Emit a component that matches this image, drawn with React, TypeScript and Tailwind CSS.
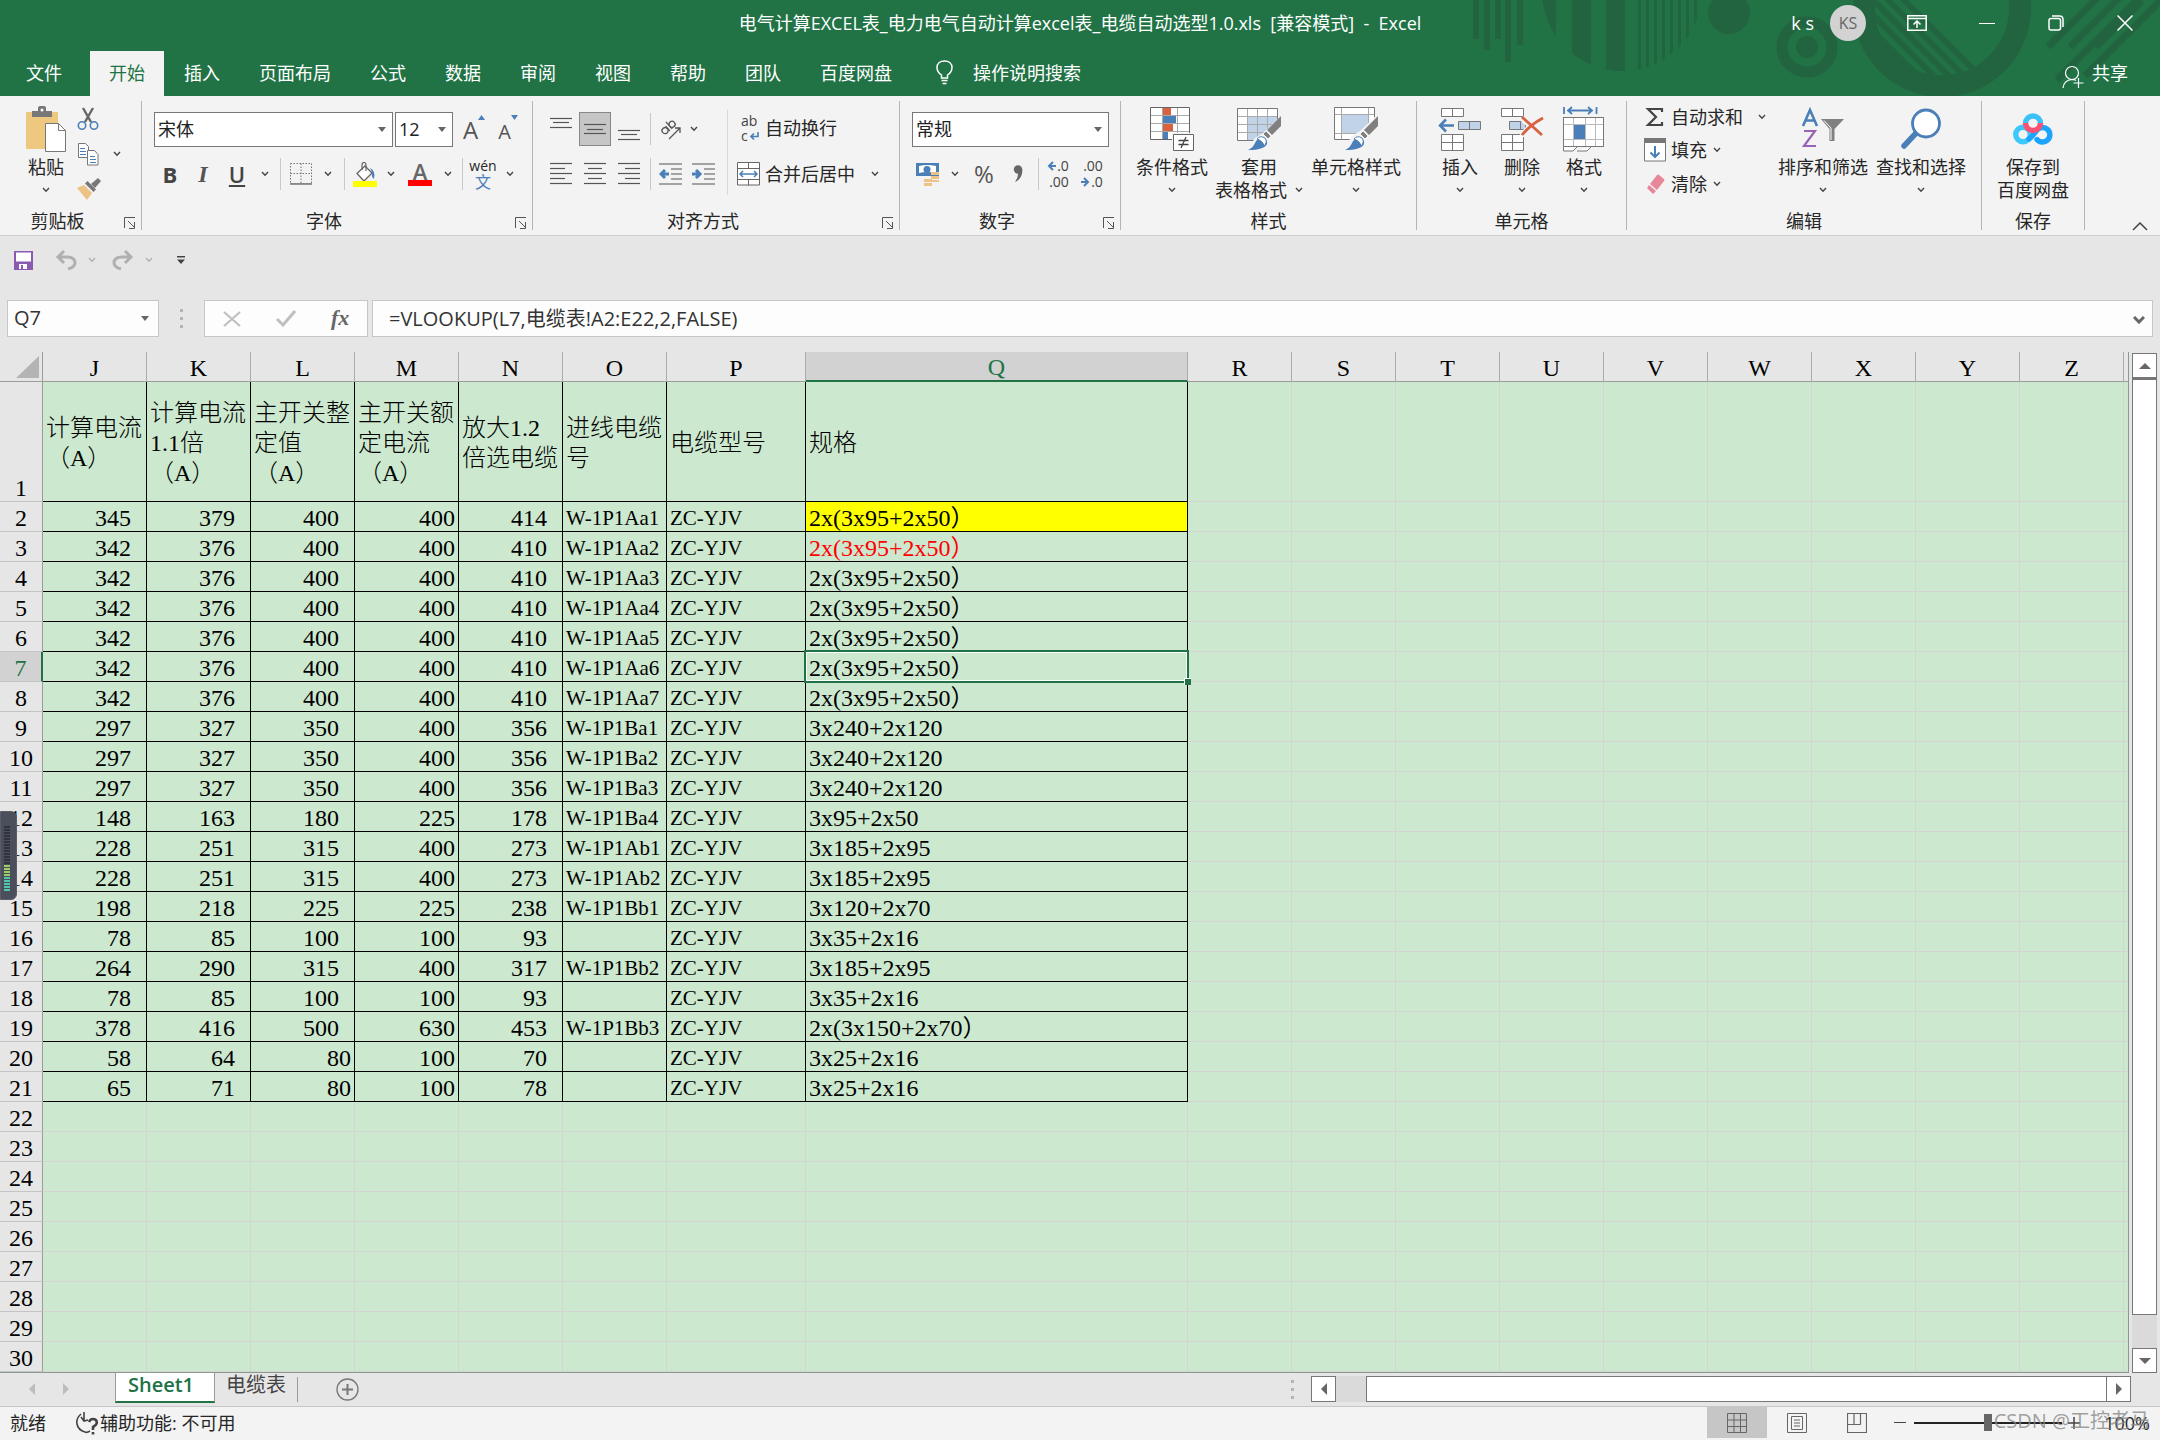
import type { ReactNode } from 'react';
import clsx from 'clsx';

const tabs = ['插入', '页面布局', '公式', '数据', '审阅', '视图', '帮助', '团队', '百度网盘'];

const columns = ['J', 'K', 'L', 'M', 'N', 'O', 'P', 'Q', 'R', 'S', 'T', 'U', 'V', 'W', 'X', 'Y', 'Z'];

const headings = [
  '计算电流\n（A）',
  '计算电流\n1.1倍\n（A）',
  '主开关整\n定值\n（A）',
  '主开关额\n定电流\n（A）',
  '放大1.2\n倍选电缆',
  '进线电缆\n号',
  '电缆型号',
  '规格',
];

const data = [
  ['345', '379', '400', '400', '414', 'W-1P1Aa1', 'ZC-YJV', '2x(3x95+2x50）'],
  ['342', '376', '400', '400', '410', 'W-1P1Aa2', 'ZC-YJV', '2x(3x95+2x50）'],
  ['342', '376', '400', '400', '410', 'W-1P1Aa3', 'ZC-YJV', '2x(3x95+2x50）'],
  ['342', '376', '400', '400', '410', 'W-1P1Aa4', 'ZC-YJV', '2x(3x95+2x50）'],
  ['342', '376', '400', '400', '410', 'W-1P1Aa5', 'ZC-YJV', '2x(3x95+2x50）'],
  ['342', '376', '400', '400', '410', 'W-1P1Aa6', 'ZC-YJV', '2x(3x95+2x50）'],
  ['342', '376', '400', '400', '410', 'W-1P1Aa7', 'ZC-YJV', '2x(3x95+2x50）'],
  ['297', '327', '350', '400', '356', 'W-1P1Ba1', 'ZC-YJV', '3x240+2x120'],
  ['297', '327', '350', '400', '356', 'W-1P1Ba2', 'ZC-YJV', '3x240+2x120'],
  ['297', '327', '350', '400', '356', 'W-1P1Ba3', 'ZC-YJV', '3x240+2x120'],
  ['148', '163', '180', '225', '178', 'W-1P1Ba4', 'ZC-YJV', '3x95+2x50'],
  ['228', '251', '315', '400', '273', 'W-1P1Ab1', 'ZC-YJV', '3x185+2x95'],
  ['228', '251', '315', '400', '273', 'W-1P1Ab2', 'ZC-YJV', '3x185+2x95'],
  ['198', '218', '225', '225', '238', 'W-1P1Bb1', 'ZC-YJV', '3x120+2x70'],
  ['78', '85', '100', '100', '93', '', 'ZC-YJV', '3x35+2x16'],
  ['264', '290', '315', '400', '317', 'W-1P1Bb2', 'ZC-YJV', '3x185+2x95'],
  ['78', '85', '100', '100', '93', '', 'ZC-YJV', '3x35+2x16'],
  ['378', '416', '500', '630', '453', 'W-1P1Bb3', 'ZC-YJV', '2x(3x150+2x70）'],
  ['58', '64', '80', '100', '70', '', 'ZC-YJV', '3x25+2x16'],
  ['65', '71', '80', '100', '78', '', 'ZC-YJV', '3x25+2x16'],
];

const emptyRows = [22, 23, 24, 25, 26, 27, 28, 29, 30, 31];

/* ---------- small building blocks ---------- */

function Chevron({ className = 'text-[#444]' }: { className?: string }) {
  return (
    <svg width="8" height="6" viewBox="0 0 8 6" className={clsx('shrink-0', className)} fill="none" stroke="currentColor" strokeWidth="1.4">
      <path d="M1 1l3 3.2L7 1" />
    </svg>
  );
}

function Caret({ className }: { className?: string }) {
  return (
    <svg width="8" height="5" viewBox="0 0 8 5" className={clsx('pointer-events-none', className)} fill="#666">
      <path d="M0 0h8L4 5z" />
    </svg>
  );
}

function Tool({ label, className, children }: { label: string; className: string; children: ReactNode }) {
  return (
    <button type="button" aria-label={label} className={clsx('flex h-[34px] shrink-0 items-center justify-center', className)}>
      {children}
    </button>
  );
}

function Separator({ className }: { className: string }) {
  return (
    <div className={clsx('flex h-8 shrink-0 justify-center', className)}>
      <div className="h-full w-px bg-[#c8c8c8]" />
    </div>
  );
}

function Combo({ label, value, className }: { label: string; value: string; className: string }) {
  return (
    <div className={clsx('relative h-[35px] shrink-0', className)}>
      <select aria-label={label} className="h-full w-full appearance-none border border-[#777] bg-white pb-[2px] pl-[3px] text-[#222]">
        <option>{value}</option>
      </select>
      <Caret className="absolute top-[15px] right-[7px]" />
    </div>
  );
}

function Group({ title, launcher = true, className, children }: { title: string; launcher?: boolean; className: string; children: ReactNode }) {
  return (
    <section aria-label={title} className={clsx('relative flex h-[129px] shrink-0 flex-col border-r border-[#b4b4b4]', className)}>
      <div className="flex h-[111px] items-start">{children}</div>
      <div className="text-center leading-[18px]">{title}</div>
      {launcher && (
        <button type="button" aria-label={title + '设置'} className="absolute right-[5px] bottom-px">
          <svg width="12" height="12" viewBox="0 0 12 12" fill="none" stroke="#555">
            <path d="M.5 11V.5H11M4 4l6 6M10.500 5v6.500H5" />
          </svg>
        </button>
      )}
    </section>
  );
}

function BigButton({ icon, lines, className }: { icon: ReactNode; lines: string[]; className: string }) {
  return (
    <button type="button" className={clsx('flex shrink-0 flex-col items-center', className)}>
      <span className="flex h-[55px] items-center justify-center">{icon}</span>
      <span className="leading-[22px] whitespace-nowrap">{lines[0]}</span>
      <span className="flex h-6 items-center gap-2 leading-6 whitespace-nowrap">
        {lines[1]}
        <Chevron />
      </span>
    </button>
  );
}

function Lines({ rows }: { rows: number[][] }) {
  return (
    <svg width="22" height="30" viewBox="0 0 22 30" stroke="#555" strokeWidth="1.200">
      {rows.map(([x1, x2, y], i) => (
        <path key={i} d={`M${x1} ${y + 0.5}H${x2}`} />
      ))}
    </svg>
  );
}

/* ---------- icons ---------- */

function PasteIcon() {
  return (
    <svg width="42" height="46" viewBox="0 0 42 46">
      <rect x="1" y="6" width="32" height="37" rx="1" fill="#edc87e" />
      <path d="M7 5h6V2q0-2 2-2h4q2 0 2 2v3h6v6H7z" fill="#777" />
      <circle cx="17" cy="4" r="1.500" fill="#fff" />
      <path d="M20.500 17.500h13l7 7v21h-20z" fill="#fff" stroke="#777" />
      <path d="M33.500 17.500v7h7" fill="none" stroke="#777" />
    </svg>
  );
}

function CutIcon() {
  return (
    <svg width="22" height="24" viewBox="0 0 22 24" fill="none">
      <path d="M6 1l8 14M16 1L8 15" stroke="#666" strokeWidth="2.400" />
      <circle cx="5" cy="18.500" r="3.700" stroke="#4a7fb8" strokeWidth="1.600" />
      <circle cx="17" cy="18.500" r="3.700" stroke="#4a7fb8" strokeWidth="1.600" />
    </svg>
  );
}

function CopyIcon() {
  return (
    <svg width="22" height="24" viewBox="0 0 22 24" stroke="#777" fill="#fff">
      <path d="M1.500 1.500h7l3 3v11h-10z" />
      <path d="M3 6.500h5M3 9.500h6M3 12.500h6" stroke="#4a7fb8" />
      <path d="M10.500 8.500h7l3.500 4v10.500H10.500z" />
      <path d="M13 14.500h5M13 17.500h6M13 20.500h6" stroke="#4a7fb8" />
    </svg>
  );
}

function PainterIcon() {
  return (
    <svg width="24" height="22" viewBox="0 0 24 22">
      <path d="M0 10l7-3 8 8-5 7z" fill="#edc287" />
      <path d="M8 5.500l2.500-2.500 8.500 8.500-2.500 2.500z" fill="#777" />
      <path d="M14 6l7-6 3 3-6 7z" fill="#777" />
    </svg>
  );
}

function BordersIcon() {
  return (
    <svg width="22" height="22" viewBox="0 0 22 22" fill="none" stroke="#777">
      <path d="M.5 .5h21v20H.5zM11 .5v20M.5 10.500h21" strokeDasharray="1.500 1.500" />
      <path d="M0 21h22" strokeWidth="1.500" />
    </svg>
  );
}

function FillColorIcon() {
  return (
    <svg width="24" height="25" viewBox="0 0 24 25">
      <path d="M4 11.500L12 4l7 7-8 8z" fill="#fff" stroke="#666" strokeWidth="1.300" />
      <path d="M9 8V3q0-2.500 2-2.500T13 3v6" fill="none" stroke="#666" strokeWidth="1.200" />
      <path d="M17 6q6 3 4 11-3-2-2-7z" fill="#4a7fb8" />
      <path d="M0 19h24v6H0z" fill="#ff0" />
    </svg>
  );
}

function CondFormatIcon() {
  return (
    <svg width="44" height="44" viewBox="0 0 44 44">
      <path d="M.5 .5h39v32H.5z" fill="#fff" />
      <path d="M13 1h8v7h-8z" fill="#d8623f" />
      <path d="M13 9h13v7H13z" fill="#4a7fb8" />
      <path d="M13 17h10v7H13z" fill="#d8623f" />
      <path d="M13 25h5v7h-5z" fill="#4a7fb8" />
      <path d="M.5 8.500h39M.5 16.500h39M.5 24.500h39M12.500 0v32M27.500 0v32" stroke="#aaa" />
      <path d="M.5 .5h39v32H.5z" fill="none" stroke="#666" />
      <path d="M22 26h22v18H22z" fill="#f3f3f3" />
      <path d="M23.500 27.500h20v16h-20z" fill="#fff" stroke="#666" />
      <path d="M28.500 33.500h10M28.500 37.500h10M36 30l-5 11" stroke="#444" strokeWidth="1.300" />
    </svg>
  );
}

function Brush() {
  return (
    <g>
      <path d="M44 9v10l-9 9-5-5z" fill="#808080" />
      <path d="M29 24l5 5-3 3-5-5z" fill="#808080" stroke="#fff" strokeWidth=".8" />
      <path d="M11 43q5-2 7-7t8-5q5 2 4 6-3 6-19 6z" fill="#4a7fb8" />
      <path d="M20 32q3-4 8-1 3 4-1 8-1-5-7-7z" fill="#fff" stroke="#4a7fb8" />
    </g>
  );
}

function TableFormatIcon() {
  return (
    <svg width="44" height="44" viewBox="0 0 44 44">
      <path d="M.5 1.500h40v32H.5z" fill="#fff" />
      <path d="M11 10h29v23H11z" fill="#c0d3e9" />
      <path d="M.5 9.500h40M.5 17.500h40M.5 25.500h40M10.500 1v32M20.500 1v32M30.500 1v32" stroke="#aaa" />
      <path d="M.5 1.500h40v32H.5z" fill="none" stroke="#777" />
      <path d="M44 9L26 26l-8 5-8 12h34z" fill="#f3f3f3" />
      <Brush />
    </svg>
  );
}

function CellStylesIcon() {
  return (
    <svg width="44" height="44" viewBox="0 0 44 44">
      <path d="M.5 .5h40v32H.5z" fill="#fff" />
      <path d="M8 8h26v18H8z" fill="#c0d3e9" />
      <path d="M.5 7.500h40M.5 26.500h40M7.500 0v32M34.500 0v32" stroke="#aaa" />
      <path d="M.5 .5h40v32H.5z" fill="none" stroke="#777" />
      <path d="M44 7L26 24l-8 5-8 12h34z" fill="#f3f3f3" />
      <Brush />
    </svg>
  );
}

function InsertCellsIcon() {
  return (
    <svg width="44" height="44" viewBox="0 0 44 44" fill="#fff" stroke="#777">
      <path d="M3.500 1.500h22v8h-22zM14.500 1.500v8M3.500 27.500h22v16h-22zM14.500 27.500v16M3.500 35.500h22" />
      <path d="M20.500 14.500h22v8h-22zM31.500 14.500v8" fill="#c0d3e9" />
      <path d="M16 18.500H2M8 12.500l-6 6 6 6" fill="none" stroke="#4a7fb8" strokeWidth="2.500" />
    </svg>
  );
}

function DeleteCellsIcon() {
  return (
    <svg width="44" height="44" viewBox="0 0 44 44" fill="#fff" stroke="#777">
      <path d="M1.500 1.500h22v8h-22zM12.500 1.500v8M1.500 27.500h22v16h-22zM12.500 27.500v16M1.500 35.500h22" />
      <path d="M9.500 14.500h16v8h-16zM20.500 14.500v8" fill="#c0d3e9" />
      <path d="M22 11l20 18M42 11Q30 18 22 29" fill="none" stroke="#f3f3f3" strokeWidth="6" />
      <path d="M22 10l20 18M43 11Q30 18 22 28" fill="none" stroke="#d8623f" strokeWidth="2.800" />
    </svg>
  );
}

function FormatCellsIcon() {
  return (
    <svg width="42" height="46" viewBox="0 0 42 46" fill="#fff" stroke="#777">
      <path d="M.5 11.500h40v29H.5z" />
      <path d="M.5 18.500h40M.5 33.500h40M10.500 11v30M22.500 11v30M32.500 11v30" stroke="#bbb" />
      <path d="M.5 11.500h40v29H.5z" fill="none" />
      <path d="M11 19h11v14H11z" fill="#4a7fb8" stroke="none" />
      <path d="M.5 41v4H10l4-4M14 45h10l4-4" />
      <path d="M1 1v7M33.500 1v7M5 4.500h24M9 1L5 4.500 9 8M25 1l4 3.500L25 8" fill="none" stroke="#4a7fb8" strokeWidth="1.800" />
    </svg>
  );
}

function SortIcon() {
  return (
    <svg width="44" height="44" viewBox="0 0 44 44" fill="none">
      <path d="M2 19L9 3l7 16M4.500 13.500h9" stroke="#4a7fb8" strokeWidth="2.600" />
      <path d="M3 24h11L3 39h12" stroke="#9b63b8" strokeWidth="2.200" />
      <path d="M20 12h23L33.500 22v12h-5V22z" fill="#808080" />
      <path d="M23 13.500l7 7.500v12" stroke="#fff" />
    </svg>
  );
}

function FindIcon() {
  return (
    <svg width="42" height="42" viewBox="0 0 42 42">
      <path d="M18 23L4 38" stroke="#4a7fb8" strokeWidth="5.500" strokeLinecap="round" />
      <circle cx="26" cy="15.500" r="13.500" fill="#fff" stroke="#4a7fb8" strokeWidth="2.800" />
    </svg>
  );
}

function BaiduIcon() {
  return (
    <svg width="40" height="32" viewBox="0 0 40 32" fill="none" strokeWidth="5.400">
      <circle cx="10" cy="21.500" r="7.300" stroke="#3cc8fa" />
      <path d="M16 26q2.500-1.500 8-9a7.300 7.300 0 1 1 0 9.500" stroke="#1ba4fb" strokeLinecap="round" />
      <path d="M12.500 10.500a7.500 7.500 0 0 1 15 0" stroke="#3cc0fa" />
      <path d="M12.500 10a7.500 7.500 0 0 0 15 0" stroke="#fb5274" />
    </svg>
  );
}

function TitlePattern() {
  return (
    <svg width="700" height="96" viewBox="1460 0 700 96" className="absolute top-0 right-0" fill="#22643f">
      <path d="M1473 0h6v39h-6zM1484 0h6v50h-6zM1495 0h6v39h-6zM1505 0h6v62h-6zM1517 0h6v45h-6z" />
      <clipPath id="disc">
        <circle cx="1622" cy="-9" r="80" />
      </clipPath>
      <g clipPath="url(#disc)">
        <path d="M1540 0h16v80h-16zM1572 0h19v80h-19zM1606 0h19v80h-19zM1638 0h3v80h-3zM1646 0h3v80h-3zM1654 0h3v80h-3zM1662 0h3v80h-3zM1670 0h3v80h-3zM1678 0h3v80h-3zM1686 0h3v80h-3zM1694 0h3v80h-3z" />
      </g>
      <circle cx="1729" cy="13" r="21" />
      <circle cx="1807" cy="47" r="25" fill="none" stroke="#22643f" strokeWidth="11" />
      <circle cx="1807" cy="47" r="11" />
      <circle cx="1942" cy="8" r="78" fill="none" stroke="#22643f" strokeWidth="22" />
      <clipPath id="ringHole">
        <path d="M1872 8a70 70 0 0 0 110 64L1912 0h-36z" />
      </clipPath>
      <g clipPath="url(#ringHole)" stroke="#22643f" strokeWidth="6">
        <path d="M1896-8l90 90M1882-6l90 90M1868-5l90 90M1854-4l90 90M1840-2l90 90M1826 0l90 90" />
      </g>
      <path d="M2048 47l50-50M2070 47l50-50M2096 47l46-46M2057 80l100-100M2085 76l76-76" fill="none" stroke="#22643f" strokeWidth="7" />
    </svg>
  );
}

/* ---------- sections ---------- */

function TitleBar() {
  return (
    <header className="relative bg-[#217346] text-white">
      <TitlePattern />
      <div className="relative flex h-[46px] items-center">
        <div className="flex-1" />
        <h1 className="whitespace-pre">电气计算EXCEL表_电力电气自动计算excel表_电缆自动选型1.0.xls  [兼容模式]  -  Excel</h1>
        <div className="flex flex-1 items-center justify-end">
          <span className="mr-4">k s</span>
          <span className="mr-4 flex size-9 items-center justify-center rounded-full bg-[#d2d2d2] text-base text-[#666]">KS</span>
          <button type="button" aria-label="功能区显示选项" className="flex w-[70px] justify-center">
            <svg width="20" height="16" viewBox="0 0 20 16" fill="none" stroke="#fff" strokeWidth="1.500">
              <path d="M.8 .8h18.400v14.400H.8zM1 3.500h18M10 13V6M6.500 9.500L10 6l3.500 3.500" />
            </svg>
          </button>
          <button type="button" aria-label="最小化" className="flex w-[69px] justify-center">
            <span className="h-px w-4 bg-white" />
          </button>
          <button type="button" aria-label="还原" className="flex w-[69px] justify-center">
            <svg width="16" height="16" viewBox="0 0 16 16" fill="none" stroke="#fff" strokeWidth="1.500">
              <rect x="1" y="3.500" width="11.500" height="11.500" rx="2" />
              <path d="M4 1h7.500Q15 1 15 4.500V12" />
            </svg>
          </button>
          <button type="button" aria-label="关闭" className="flex w-[70px] justify-center">
            <svg width="16" height="16" viewBox="0 0 16 16" stroke="#fff" strokeWidth="1.500">
              <path d="M.5 .5l15 15M15.500 .5l-15 15" />
            </svg>
          </button>
        </div>
      </div>
      <nav className="relative flex h-[50px] items-end gap-px pl-[7px] *:h-[45px] *:pb-[2px]">
        <button type="button" className="mr-2 px-[19px]">文件</button>
        <button type="button" className="bg-[#f3f3f3] px-[19px] text-[#217346]">开始</button>
        {tabs.map((tab) => (
          <button type="button" key={tab} className="px-[19px]">{tab}</button>
        ))}
        <button type="button" className="ml-[24px] flex items-center gap-5">
          <svg width="17" height="25" viewBox="0 0 17 25" fill="none" stroke="#fff" strokeWidth="1.500">
            <path d="M5.500 18v-3Q1 12 1 7.500C1 3.500 4 1 8.500 1S16 3.500 16 7.500q0 4.500-4.500 7.500v3zM5.500 20.500h6M6.500 23.500h4" />
          </svg>
          操作说明搜索
        </button>
        <div className="flex-1" />
        <button type="button" className="mr-8 flex items-center gap-2">
          <svg width="22" height="24" viewBox="0 0 22 24" fill="none" stroke="#fff" strokeWidth="1.200" className="mt-2">
            <circle cx="10" cy="8" r="6.500" />
            <path d="M1 23q1-8 9-8.500 3 0 4 1M16.500 13v10M11.500 18h10" />
          </svg>
          共享
        </button>
      </nav>
    </header>
  );
}

function Ribbon() {
  return (
    <div className="flex h-[140px] items-start border-b border-[#d0d0d0] bg-[#f3f3f3] pt-[5px] text-[#262626]">
      <Group title="剪贴板" className="w-[142px] pr-[26px]">
        <BigButton icon={<PasteIcon />} lines={['粘贴', '']} className="ml-6 w-[44px]" />
        <div className="ml-[9px] flex flex-col">
          <button type="button" aria-label="剪切" className="flex h-[35px] w-6 items-center"><CutIcon /></button>
          <button type="button" aria-label="复制" className="flex h-[35px] w-11 items-center justify-between"><CopyIcon /><Chevron /></button>
          <button type="button" aria-label="格式刷" className="flex h-[35px] w-6 items-center"><PainterIcon /></button>
        </div>
      </Group>

      <Group title="字体" className="w-[391px] pr-[26px]">
        <div className="flex flex-col gap-[10px] pt-[11px] pl-3">
          <div className="flex items-center">
            <Combo label="字体" value="宋体" className="mr-[2px] w-[239px]" />
            <Combo label="字号" value="12" className="w-[58px]" />
            <Tool label="增大字号" className="ml-1 w-[34px] text-[#555]">
              <span className="text-2xl">A</span>
              <svg width="7" height="5" className="mb-6" fill="#4a7fb8"><path d="M0 5h7L3.500 0z" /></svg>
            </Tool>
            <Tool label="减小字号" className="w-[34px] text-[#555]">
              <span className="mt-1 text-xl">A</span>
              <svg width="7" height="5" className="mb-6" fill="#4a7fb8"><path d="M0 0h7L3.500 5z" /></svg>
            </Tool>
          </div>
          <div className="flex items-center">
            <Tool label="加粗" className="w-8 text-[22px] font-bold text-[#444]">B</Tool>
            <Tool label="倾斜" className="w-[34px] font-['Liberation_Serif',serif] text-2xl font-bold text-[#555] italic">I</Tool>
            <Tool label="下划线" className="w-[34px] text-[22px] font-semibold text-[#444] underline underline-offset-2">U</Tool>
            <Tool label="下划线选项" className="w-[22px]"><Chevron /></Tool>
            <Separator className="w-2" />
            <Tool label="边框" className="w-[34px]"><BordersIcon /></Tool>
            <Tool label="边框选项" className="w-5"><Chevron /></Tool>
            <Separator className="w-3" />
            <Tool label="填充颜色" className="w-[30px]"><FillColorIcon /></Tool>
            <Tool label="填充颜色选项" className="w-[22px]"><Chevron /></Tool>
            <Tool label="字体颜色" className="w-9 flex-col">
              <span className="text-[22px] leading-[18px] font-semibold text-[#666]">A</span>
              <span className="h-[6px] w-6 bg-[#f00]" />
            </Tool>
            <Tool label="字体颜色选项" className="w-5"><Chevron /></Tool>
            <Separator className="w-2" />
            <Tool label="拼音指南" className="w-[34px] flex-col">
              <span className="text-sm leading-[15px]">wén</span>
              <span className="text-base leading-[18px] text-[#4a7fb8]">文</span>
            </Tool>
            <Tool label="拼音选项" className="w-5"><Chevron /></Tool>
          </div>
        </div>
      </Group>

      <Group title="对齐方式" className="w-[367px] pr-[26px]">
        <div className="flex flex-col gap-[11px] pt-[11px] pl-[11px]">
          <div className="flex items-center">
            <Tool label="顶端对齐" className="w-[34px]"><Lines rows={[[0, 22, 4], [3, 19, 8], [0, 22, 13]]} /></Tool>
            <Tool label="垂直居中" className="mx-px w-8 border border-[#888] bg-[#c6c6c6]"><Lines rows={[[0, 22, 10], [3, 19, 15], [0, 22, 19]]} /></Tool>
            <Tool label="底端对齐" className="w-[34px]"><Lines rows={[[0, 22, 16], [3, 19, 20], [0, 22, 25]]} /></Tool>
            <Separator className="w-2" />
            <Tool label="方向" className="w-[34px]">
              <svg width="22" height="22" viewBox="0 0 22 22" fill="none" stroke="#555" strokeWidth="1.300">
                <g transform="rotate(-42 8 10)">
                  <circle cx="4" cy="10" r="3" />
                  <path d="M7.500 7v6.500M10.500 4v9.500" />
                  <circle cx="13.500" cy="10" r="3" />
                </g>
                <path d="M9 21L20 10M20 15v-5h-5" />
              </svg>
            </Tool>
            <Tool label="方向选项" className="w-3"><Chevron /></Tool>
          </div>
          <div className="flex items-center">
            <Tool label="左对齐" className="w-[34px]"><Lines rows={[[0, 22, 4], [0, 15, 9], [0, 22, 14], [0, 15, 19], [0, 22, 24]]} /></Tool>
            <Tool label="居中" className="w-[34px]"><Lines rows={[[0, 22, 4], [4, 18, 9], [0, 22, 14], [4, 18, 19], [0, 22, 24]]} /></Tool>
            <Tool label="右对齐" className="w-[34px]"><Lines rows={[[0, 22, 4], [7, 22, 9], [0, 22, 14], [7, 22, 19], [0, 22, 24]]} /></Tool>
            <Separator className="w-2" />
            <Tool label="减少缩进量" className="w-8">
              <svg width="23" height="22" viewBox="0 0 23 22" fill="none" stroke="#555" strokeWidth="1.200">
                <path d="M0 1h23M12 6h11M12 11h11M12 16h11M0 21h23" />
                <path d="M10 11H2M6 7l-4 4 4 4" stroke="#4a7fb8" strokeWidth="3" />
              </svg>
            </Tool>
            <Tool label="增加缩进量" className="w-[34px]">
              <svg width="23" height="22" viewBox="0 0 23 22" fill="none" stroke="#555" strokeWidth="1.200">
                <path d="M0 1h23M12 6h11M12 11h11M12 16h11M0 21h23" />
                <path d="M0 11h8M4 7l4 4-4 4" stroke="#4a7fb8" strokeWidth="3" />
              </svg>
            </Tool>
          </div>
        </div>
        <div className="mt-[9px] ml-[7px] h-[85px] w-px shrink-0 bg-[#d8d8d8]" />
        <div className="flex flex-col gap-3 pt-[10px] pl-[9px]">
          <button type="button" className="flex h-[34px] items-center gap-1">
            <span className="flex w-6 flex-col items-start pl-1 text-sm leading-[15px] text-[#444]">
              <span>ab</span>
              <span className="flex items-center gap-[2px]">
                c
                <svg width="9" height="8" fill="none" stroke="#4a7fb8" strokeWidth="1.600"><path d="M8 0v4.500H1M4 1.500l-3 3 3 3" /></svg>
              </span>
            </span>
            自动换行
          </button>
          <button type="button" className="flex h-[34px] items-center gap-1 whitespace-nowrap">
            <svg width="24" height="24" viewBox="0 0 24 24" fill="#fff" stroke="#666">
              <path d="M.5 .5h22v22.500H.5zM.5 6.500h22M.5 17.500h22M11.500 .5v6M11.500 17.500v6" />
              <path d="M3 12h17M6 9l-3 3 3 3M17 9l3 3-3 3" fill="none" stroke="#4a7fb8" strokeWidth="1.500" />
            </svg>
            合并后居中
            <Chevron className="ml-3 text-[#444]" />
          </button>
        </div>
      </Group>

      <Group title="数字" className="w-[221px] pr-[26px]">
        <div className="flex flex-col gap-[10px] pt-[11px] pl-3">
          <Combo label="数字格式" value="常规" className="w-[197px]" />
          <div className="flex items-center">
            <Tool label="会计数字格式" className="w-[31px]">
              <svg width="24" height="24" viewBox="0 0 24 24">
                <path d="M0 1h23v13H0z" fill="#4a7fb8" />
                <path d="M3 4q8-2 17 0v7q-9-2-17 0z" fill="#fff" />
                <circle cx="11" cy="7.500" r="3.500" fill="#4a7fb8" />
                <path d="M15 10h8v3h-8zM15 14h8v3h-8zM8 17h8v3H8zM8 21h8v3H8zM15 18h8v2h-8z" fill="#edc287" />
              </svg>
            </Tool>
            <Tool label="会计格式选项" className="w-6"><Chevron /></Tool>
            <Tool label="百分比样式" className="w-[34px] text-2xl text-[#555]">%</Tool>
            <Tool label="千位分隔样式" className="w-[34px]">
              <svg width="10" height="20" viewBox="0 0 10 20" fill="#666">
                <circle cx="5" cy="5.500" r="4.200" />
                <path d="M9.200 5q1 9-7.200 13 3-4 3-8z" />
              </svg>
            </Tool>
            <Separator className="w-[6px]" />
            <Tool label="增加小数位数" className="w-[34px]">
              <span className="flex flex-col items-end text-sm leading-4 text-[#444]">
                <span className="flex items-center">
                  <svg width="10" height="10" fill="none" stroke="#4a7fb8" strokeWidth="2"><path d="M9 5H2M6 1L2 5l4 4" /></svg>.0
                </span>
                <span>.00</span>
              </span>
            </Tool>
            <Tool label="减少小数位数" className="w-[34px]">
              <span className="flex flex-col items-end text-sm leading-4 text-[#444]">
                <span>.00</span>
                <span className="flex items-center">
                  <svg width="10" height="10" fill="none" stroke="#4a7fb8" strokeWidth="2"><path d="M0 5h7M3 1l4 4-4 4" /></svg>.0
                </span>
              </span>
            </Tool>
          </div>
        </div>
      </Group>

      <Group title="样式" launcher={false} className="w-[296px]">
        <BigButton icon={<CondFormatIcon />} lines={['条件格式', '']} className="ml-2 w-[86px]" />
        <BigButton icon={<TableFormatIcon />} lines={['套用', '表格格式']} className="w-[88px]" />
        <BigButton icon={<CellStylesIcon />} lines={['单元格样式', '']} className="ml-px w-[104px]" />
      </Group>

      <Group title="单元格" launcher={false} className="w-[210px]">
        <BigButton icon={<InsertCellsIcon />} lines={['插入', '']} className="ml-3 w-[62px]" />
        <BigButton icon={<DeleteCellsIcon />} lines={['删除', '']} className="w-[62px]" />
        <BigButton icon={<FormatCellsIcon />} lines={['格式', '']} className="w-[62px]" />
      </Group>

      <Group title="编辑" launcher={false} className="w-[355px]">
        <div className="ml-[17px] flex w-[130px] shrink-0 flex-col">
          <button type="button" className="flex h-8 items-center gap-[5px]">
            <svg width="22" height="20" viewBox="0 0 22 20" fill="none" stroke="#444" strokeWidth="2.200">
              <path d="M18 5V2H4l8 8-8 8h14v-3" />
            </svg>
            自动求和
            <Chevron className="ml-[10px] text-[#444]" />
          </button>
          <button type="button" className="flex h-[34px] items-center gap-[5px]">
            <svg width="22" height="24" viewBox="0 0 22 24" fill="#fff" stroke="#777">
              <path d="M.5 .5h21v22.500H.5z" />
              <path d="M0 0h22v5H0z" fill="#777" stroke="none" />
              <path d="M11 8v11M6.500 14.500L11 19l4.500-4.500" fill="none" stroke="#4a7fb8" strokeWidth="2" />
            </svg>
            填充
            <Chevron className="ml-px text-[#444]" />
          </button>
          <button type="button" className="flex h-[34px] items-center gap-[5px]">
            <svg width="22" height="22" viewBox="0 0 22 22" fill="#e88799">
              <path d="M6 11L13 2q1-1 2 0l5 4q1 1 0 2l-7 9zM5 12l7 6-3 3-6-6z" />
            </svg>
            清除
            <Chevron className="ml-px text-[#444]" />
          </button>
        </div>
        <BigButton icon={<SortIcon />} lines={['排序和筛选', '']} className="w-[98px]" />
        <BigButton icon={<FindIcon />} lines={['查找和选择', '']} className="w-[98px]" />
      </Group>

      <Group title="保存" launcher={false} className="w-[103px]">
        <button type="button" className="flex w-full flex-col items-center">
          <span className="flex h-[55px] items-center"><BaiduIcon /></span>
          <span className="leading-[22px]">保存到</span>
          <span className="leading-6">百度网盘</span>
        </button>
      </Group>
      <button type="button" aria-label="折叠功能区" className="mr-3 mb-1 ml-auto self-end">
        <svg width="16" height="9" viewBox="0 0 16 9" fill="none" stroke="#444" strokeWidth="1.500">
          <path d="M1 8l7-7 7 7" />
        </svg>
      </button>
    </div>
  );
}

function QuickAccess() {
  return (
    <div className="flex h-12 items-center pl-[14px]">
      <button type="button" aria-label="保存">
        <svg width="19" height="19" viewBox="0 0 19 19">
          <path d="M0 0h19v19H0z" fill="#8a5bb0" />
          <path d="M2 1.500h15v9H2zM5 13h8v5H5z" fill="#fff" />
          <path d="M7 14h2v4H7z" fill="#8a5bb0" />
        </svg>
      </button>
      <button type="button" aria-label="撤消" className="ml-[22px] flex items-center gap-[11px]">
        <svg width="22" height="20" viewBox="0 0 22 20" fill="none" stroke="#b0b0b0" strokeWidth="3">
          <path d="M9 1L3 7l6 6M3 7h9q8 0 8 6 0 4-7 6" />
        </svg>
        <Chevron className="text-[#b0b0b0]" />
      </button>
      <button type="button" aria-label="恢复" className="ml-4 flex items-center gap-[11px]">
        <svg width="22" height="20" viewBox="0 0 22 20" fill="none" stroke="#b0b0b0" strokeWidth="3">
          <path d="M13 1l6 6-6 6M19 7h-9q-8 0-8 6 0 4 7 6" />
        </svg>
        <Chevron className="text-[#b0b0b0]" />
      </button>
      <button type="button" aria-label="自定义快速访问工具栏" className="ml-6">
        <svg width="8" height="8" viewBox="0 0 8 8" fill="#444"><path d="M0 0h8v1.500H0zM0 3.500h8L4 8z" /></svg>
      </button>
    </div>
  );
}

function Dots() {
  return (
    <div className="flex flex-col gap-[5px]">
      <span className="size-[3px] bg-[#b4b4b4]" />
      <span className="size-[3px] bg-[#b4b4b4]" />
      <span className="size-[3px] bg-[#b4b4b4]" />
    </div>
  );
}

function FormulaBar() {
  return (
    <div className="mt-4 flex h-[37px] items-center pr-[7px] pl-[7px] text-xl text-[#333]">
      <div className="relative h-full w-[152px]">
        <input aria-label="名称框" defaultValue="Q7" className="h-full w-full border border-[#c6c6c6] bg-[#fdfdfd] pb-[2px] pl-[6px]" />
        <Caret className="absolute top-4 right-[10px]" />
      </div>
      <div className="flex w-[45px] justify-center"><Dots /></div>
      <div className="flex h-full w-[164px] items-center justify-around border border-[#c6c6c6] bg-[#fdfdfd]">
        <button type="button" aria-label="取消">
          <svg width="18" height="16" viewBox="0 0 18 16" stroke="#c0c0c0" strokeWidth="2.200"><path d="M1 1l16 14M17 1L1 15" /></svg>
        </button>
        <button type="button" aria-label="输入">
          <svg width="20" height="17" viewBox="0 0 20 17" fill="none" stroke="#c0c0c0" strokeWidth="3"><path d="M1 9l6 6L19 1" /></svg>
        </button>
        <button type="button" aria-label="插入函数" className="pb-[2px] font-['Liberation_Serif',serif] text-[22px] leading-6 font-bold text-[#666] italic">fx</button>
      </div>
      <div className="relative ml-1 h-full flex-1">
        <input
          aria-label="编辑栏"
          defaultValue="=VLOOKUP(L7,电缆表!A2:E22,2,FALSE)"
          className="h-full w-full border border-[#c6c6c6] bg-[#fdfdfd] pb-[3px] pl-4"
        />
        <svg width="12" height="8" viewBox="0 0 12 8" fill="none" stroke="#666" strokeWidth="3" className="absolute top-4 right-2">
          <path d="M1 1l5 5 5-5" />
        </svg>
      </div>
    </div>
  );
}

function RowHead({ row }: { row: number }) {
  return (
    <th
      scope="row"
      className={clsx(
        'border-b border-b-[#c4c4c4] pt-1 align-bottom font-normal',
        row === 7 ? 'border-r-2 border-r-[#217346] bg-[#d2d2d2] text-[#217346]' : 'border-r border-r-[#9b9b9b] bg-[#e6e6e6]',
      )}
    >
      {row}
    </th>
  );
}

function Sheet() {
  return (
    <table className="w-full table-fixed border-separate border-spacing-0 bg-[#cce8cf] font-['Liberation_Serif','Noto_Sans_CJK_SC',serif] text-2xl leading-[25px] text-black">
      <colgroup>
        <col className="w-[43px]" />
        {columns.map((name) => (
          <col key={name} className={name === 'P' ? 'w-[139px]' : name === 'Q' ? 'w-[382px]' : 'w-[104px]'} />
        ))}
        <col />
      </colgroup>
      <thead>
        <tr className="h-[30px] bg-[#e6e6e6]">
          <td className="border-r border-b border-[#9b9b9b]">
            <svg width="23" height="22" viewBox="0 0 23 22" className="ml-4" fill="#b4b4b4"><path d="M23 0v22H0z" /></svg>
          </td>
          {columns.map((name) => (
            <th
              key={name}
              scope="col"
              className={clsx(
                'border-r border-r-[#ababab] pt-[3px] align-bottom font-normal',
                name === 'Q' ? 'border-b-2 border-b-[#217346] bg-[#d2d2d2] text-[#217346]' : 'border-b border-b-[#9b9b9b]',
              )}
            >
              {name}
            </th>
          ))}
          <td className="border-b border-[#9b9b9b]" />
        </tr>
      </thead>
      <tbody>
        <tr className="h-[120px]">
          <RowHead row={1} />
          {headings.map((text) => (
            <td key={text} className="border-r border-b border-black px-[3px] pt-[3px] text-left leading-[30px] font-light whitespace-pre">{text}</td>
          ))}
          {columns.slice(8).map((name) => (
            <td key={name} className="border-r border-b border-[#d4d4d4]" />
          ))}
          <td className="border-b border-[#d4d4d4]" />
        </tr>
        {data.map((cells, r) => (
          <tr key={r} className="h-[30px]">
            <RowHead row={r + 2} />
            {cells.map((value, c) => (
              <td
                key={c}
                className={clsx(
                  'border-r border-b border-black pt-1 align-bottom whitespace-nowrap',
                  c < 5 && 'text-right',
                  c === 3 || (c === 2 && value === '80') ? 'pr-[3px]' : c < 5 && 'pr-[15px]',
                  (c === 5 || c === 6) && 'pl-[3px] text-[21px]',
                  c === 7 && 'relative pl-[3px]',
                  c === 7 && r === 0 && 'bg-[#ff0]',
                  c === 7 && r === 1 && 'text-[#f00]',
                )}
              >
                {value}
                {c === 7 && r === 5 && (
                  <div className="absolute -inset-[2px] z-10 border-2 border-[#217346]">
                    <div className="h-full border border-white" />
                    <span className="absolute -right-1 -bottom-1 size-[7px] border-t border-l border-white bg-[#217346]" />
                  </div>
                )}
              </td>
            ))}
            {columns.slice(8).map((name) => (
              <td key={name} className="border-r border-b border-[#d4d4d4]" />
            ))}
            <td className="border-b border-[#d4d4d4]" />
          </tr>
        ))}
        {emptyRows.map((row) => (
          <tr key={row} className="h-[30px]">
            <RowHead row={row} />
            {columns.map((name) => (
              <td key={name} className="border-r border-b border-[#d4d4d4]" />
            ))}
            <td className="border-b border-[#d4d4d4]" />
          </tr>
        ))}
      </tbody>
    </table>
  );
}

function ScrollButton({ label, path, className }: { label: string; path: string; className: string }) {
  return (
    <button type="button" aria-label={label} className={clsx('flex w-[25px] shrink-0 items-center justify-center border border-[#777] bg-white', className)}>
      <svg width="12" height="12" viewBox="0 0 12 12" fill="#666"><path d={path} /></svg>
    </button>
  );
}

function SheetTabs() {
  return (
    <div className="flex h-[33px] shrink-0 items-start text-xl text-[#444]">
      <div className="flex h-8 w-[115px] items-center gap-7 pl-[29px]">
        <svg width="6" height="12" fill="#bdbdbd"><path d="M6 0v12L0 6z" /></svg>
        <svg width="6" height="12" fill="#bdbdbd"><path d="M0 0v12l6-6z" /></svg>
      </div>
      <button type="button" className="h-[30px] w-[100px] border-x border-b-2 border-x-[#9b9b9b] border-b-[#217346] bg-white pr-2 pb-1 leading-6 font-semibold text-[#217346]">
        Sheet1
      </button>
      <button type="button" className="h-6 px-[11px] leading-6">电缆表</button>
      <div className="mt-1 h-[25px] w-px bg-[#9b9b9b]" />
      <button type="button" aria-label="新工作表" className="mt-[5px] ml-[38px]">
        <svg width="23" height="23" viewBox="0 0 23 23" fill="none" stroke="#777">
          <circle cx="11.500" cy="11.500" r="10.500" strokeWidth="1.300" />
          <path d="M11.500 6v11M6 11.500h11" strokeWidth="2" />
        </svg>
      </button>
      <div className="flex-1" />
      <div className="mt-[7px]"><Dots /></div>
      <div className="mt-[3px] mr-[29px] ml-[17px] flex h-[26px] w-[820px]">
        <ScrollButton label="向左滚动" path="M9 0v12L3 6z" className="h-full" />
        <div className="h-full w-[30px] bg-[#dadada]" />
        <div className="h-full flex-1 border border-r-0 border-[#777] bg-white" />
        <ScrollButton label="向右滚动" path="M3 0v12l6-6z" className="h-full" />
      </div>
    </div>
  );
}

function StatusBar() {
  return (
    <footer className="relative flex h-[34px] shrink-0 items-center border-t border-[#c6c6c6] bg-[#f3f3f3] pb-[2px] pl-[10px] text-[#262626]">
      <span>就绪</span>
      <svg width="22" height="24" viewBox="0 0 22 24" fill="none" stroke="#444" strokeWidth="1.600" className="ml-[30px]">
        <path d="M8 1v9M5 6l3 4 4-1M5 3Q0 7 1 13t8 8M14 20q-3 2-5 1" />
        <path d="M13 11q1-3 4-3t4 3q0 3-4 5v3M17 21v2.500" strokeWidth="2.600" />
      </svg>
      <span className="ml-[2px]">辅助功能: 不可用</span>
      <div className="flex-1" />
      <button type="button" aria-label="普通" className="flex h-full w-[60px] items-center justify-center bg-[#c6c6c6]">
        <svg width="20" height="20" viewBox="0 0 20 20" fill="none" stroke="#666"><path d="M.5 .5h19v19H.5zM.5 7h19M.5 13.500h19M7 .5v19M13.500 .5v19" /></svg>
      </button>
      <button type="button" aria-label="页面布局" className="flex h-full w-[60px] items-center justify-center">
        <svg width="20" height="20" viewBox="0 0 20 20" fill="none" stroke="#666"><path d="M.5 .5h19v19H.5zM4.500 3.500h11v13h-11zM7 7h6M7 10h6M7 13h6" /></svg>
      </button>
      <button type="button" aria-label="分页预览" className="flex h-full w-[60px] items-center justify-center">
        <svg width="20" height="20" viewBox="0 0 20 20" fill="none" stroke="#666" strokeWidth="1.200"><path d="M.5 .5h19v19H.5zM7 .5v11M13.500 .5v11M.5 11.500h13" /></svg>
      </button>
      <button type="button" aria-label="缩小" className="ml-[7px] h-4 w-[14px]"><span className="block h-px w-3 bg-[#444]" /></button>
      <input
        type="range"
        aria-label="缩放"
        defaultValue={50}
        className="mx-[6px] h-[17px] w-[148px] appearance-none bg-transparent bg-[linear-gradient(#222,#222)] bg-[length:100%_2px] bg-center bg-no-repeat [&::-webkit-slider-thumb]:h-[17px] [&::-webkit-slider-thumb]:w-2 [&::-webkit-slider-thumb]:appearance-none [&::-webkit-slider-thumb]:bg-[#666]"
      />
      <button type="button" aria-label="放大" className="w-4">
        <svg width="12" height="12" stroke="#444" strokeWidth="1.500"><path d="M6 0v12M0 6h12" /></svg>
      </button>
      <span className="mr-[10px] ml-5">100%</span>
      <span className="absolute right-[10px] bottom-[5px] text-xl leading-7 whitespace-nowrap text-[#888]/80">CSDN @工控老马</span>
    </footer>
  );
}

function LevelMeter() {
  return (
    <div className="absolute top-[811px] left-0 z-20 flex h-[89px] w-[17px] flex-col justify-end gap-px rounded-r-md border border-[#5a5e6b] bg-[#4b4f5c] pb-2 pl-[3px]">
      {Array.from({ length: 22 }, (_, i) => (
        <span key={i} className={clsx('h-[2px] w-[6px]', i < 13 ? 'bg-[#30333d]' : i < 17 ? 'bg-[#9ccb6a]' : 'bg-[#4fc5b0]')} />
      ))}
    </div>
  );
}

export default function App() {
  return (
    <div className="relative flex h-screen flex-col overflow-hidden bg-[#e6e6e6] font-['Open_Sans','Noto_Sans_CJK_SC',sans-serif] text-lg">
      <TitleBar />
      <Ribbon />
      <QuickAccess />
      <FormulaBar />
      <main className="mt-[15px] flex min-h-0 flex-1">
        <div className="min-w-0 flex-1 overflow-hidden border-r border-b border-[#8a9a8c]">
          <Sheet />
        </div>
        <div className="mx-[3px] mt-px flex w-[25px] flex-col">
          <ScrollButton label="向上滚动" path="M0 9h12L6 3z" className="h-[25px]" />
          <div className="w-full flex-1 border border-t-2 border-[#777] bg-white" />
          <div className="h-[33px] w-full bg-[#dadada]" />
          <ScrollButton label="向下滚动" path="M0 3h12L6 9z" className="h-[25px]" />
        </div>
      </main>
      <SheetTabs />
      <StatusBar />
      <LevelMeter />
    </div>
  );
}
